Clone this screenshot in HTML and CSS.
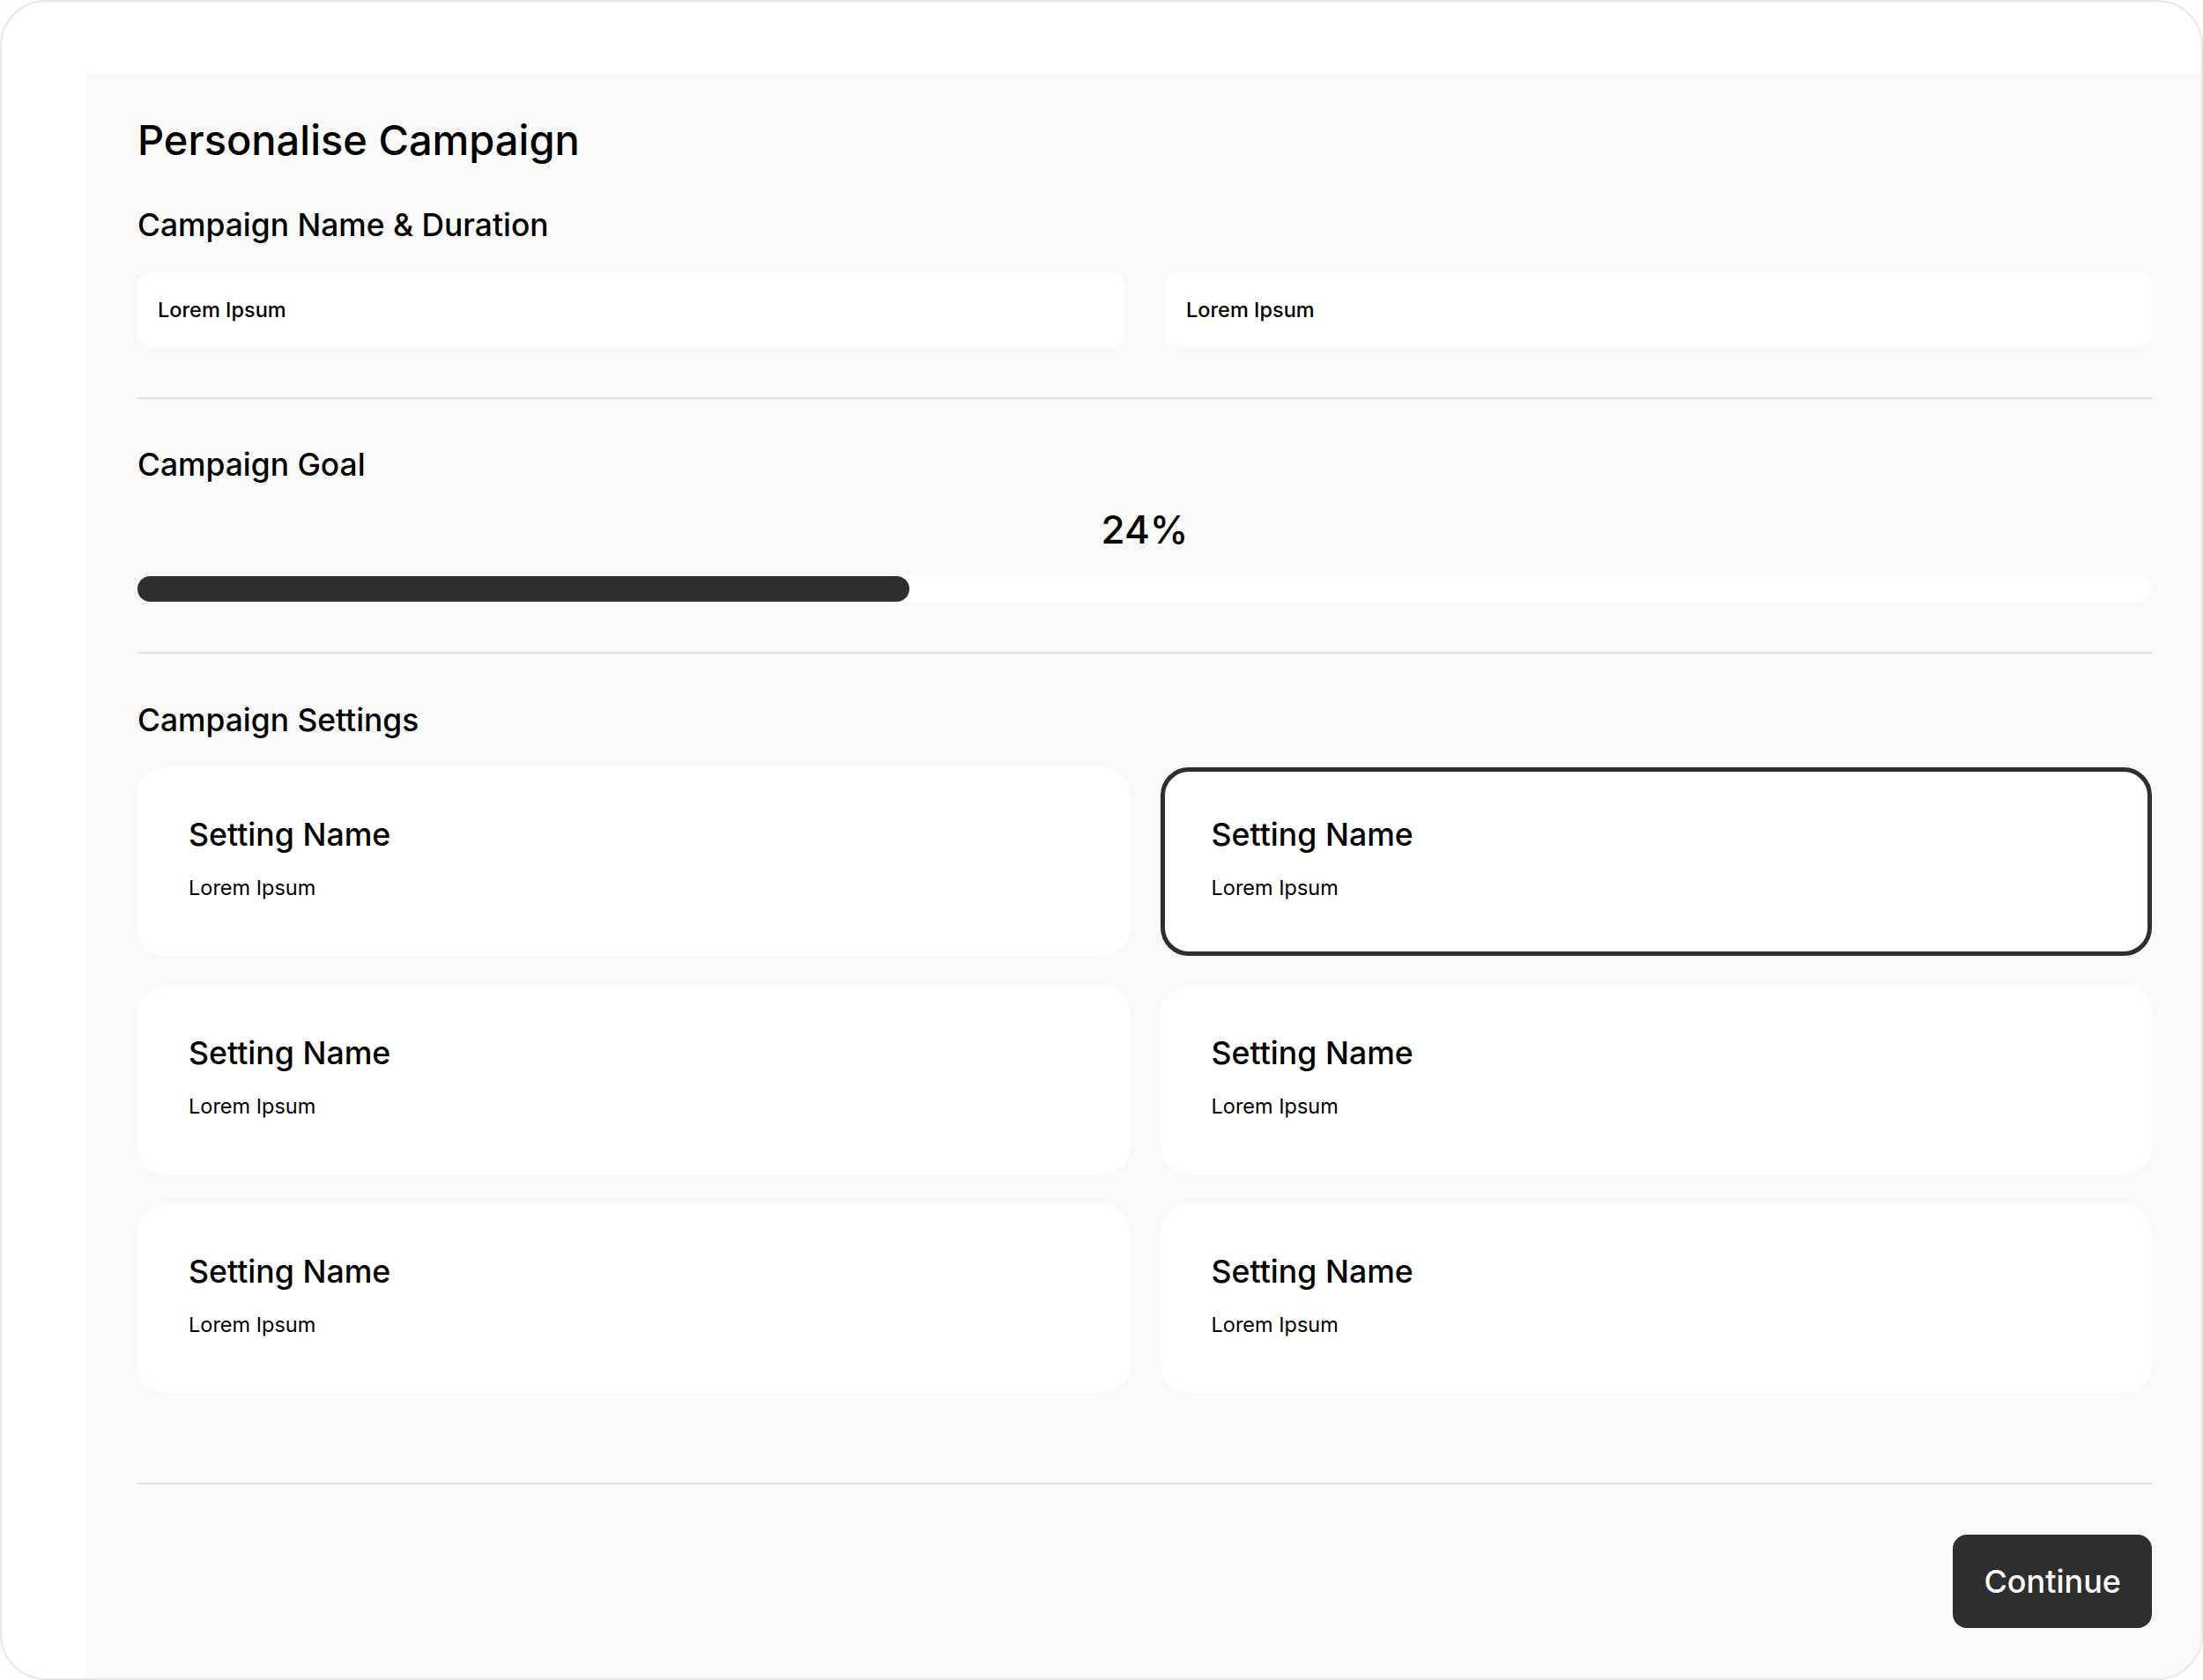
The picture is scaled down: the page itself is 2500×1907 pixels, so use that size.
FILE: index.html
```html
<!DOCTYPE html>
<html>
    <head>
        <meta charset="utf-8">
        <link rel="stylesheet" href="styles.css">
    </head>
    <body>
        <div id="frame">
            <main id="panel">
                <h1 class="page-title">Personalise Campaign</h1>

                <section class="block name-block">
                    <h2 class="block-title">Campaign Name &amp; Duration</h2>
                    <div class="field-row">
                        <div class="field">Lorem Ipsum</div>
                        <div class="field">Lorem Ipsum</div>
                    </div>
                </section>

                <hr class="divider name-divider"/>

                <section class="block goal-block">
                    <h2 class="block-title">Campaign Goal</h2>
                    <div class="goal-value">24%</div>
                    <div class="progress">
                        <div class="progress-fill" style="width: 38.3%"></div>
                    </div>
                </section>

                <hr class="divider goal-divider"/>

                <section class="block settings-block">
                    <h2 class="block-title">Campaign Settings</h2>
                    <div class="settings-grid">
                        <div class="setting">
                            <div class="setting-name">Setting Name</div>
                            <div class="setting-desc">Lorem Ipsum</div>
                        </div>
                        <div class="setting active">
                            <div class="setting-name">Setting Name</div>
                            <div class="setting-desc">Lorem Ipsum</div>
                        </div>
                        <div class="setting">
                            <div class="setting-name">Setting Name</div>
                            <div class="setting-desc">Lorem Ipsum</div>
                        </div>
                        <div class="setting">
                            <div class="setting-name">Setting Name</div>
                            <div class="setting-desc">Lorem Ipsum</div>
                        </div>
                        <div class="setting">
                            <div class="setting-name">Setting Name</div>
                            <div class="setting-desc">Lorem Ipsum</div>
                        </div>
                        <div class="setting">
                            <div class="setting-name">Setting Name</div>
                            <div class="setting-desc">Lorem Ipsum</div>
                        </div>
                    </div>
                </section>

                <hr class="divider settings-divider"/>

                <div class="actions">
                    <button id="continue">Continue</button>
                </div>
            </main>
        </div>
    </body>
</html>
```

FILE: styles.css
```css
html, body{
    margin: 0;
    padding: 0;
}

body{
    font-family: 'Inter', 'Noto Sans', sans-serif;
    color: #000;
    background-color: #fff;
}

#frame{
    box-sizing: border-box;
    width: 2500px;
    height: 1907px;
    border: 2px solid #e8e8e8;
    border-radius: 52px;
    background-color: #fff;
    overflow: hidden;
    display: flex;
    flex-direction: column;
}

#panel{
    flex: 1;
    margin: 82px 0 0 96px;
    padding: 46px 56px 57px 58px;
    background-color: #f9f9f9;
    display: flex;
    flex-direction: column;
}

.page-title{
    margin: 0;
    font-size: 47px;
    line-height: 58px;
    font-weight: 500;
}

.block-title{
    margin: 0;
    font-size: 35.4px;
    line-height: 44px;
    font-weight: 500;
}

.name-block{
    margin-top: 46px;
}

.field-row{
    display: flex;
    gap: 48px;
    margin-top: 32px;
}

.field{
    flex: 1;
    height: 83px;
    box-sizing: border-box;
    padding-left: 23px;
    display: flex;
    align-items: center;
    background-color: #fff;
    border-radius: 13px;
    font-size: 23.5px;
    font-weight: 500;
}

.divider{
    border: 0;
    height: 2px;
    margin: 0;
    background-color: #e3e3e3;
}

.name-divider{
    margin-top: 58px;
}

.goal-block{
    margin-top: 53px;
}

.goal-value{
    margin-top: 22px;
    text-align: center;
    font-size: 44px;
    line-height: 58px;
    font-weight: 500;
}

.progress{
    margin-top: 24px;
    height: 29px;
    border-radius: 15px;
    background-color: #fff;
}

.progress-fill{
    height: 100%;
    border-radius: 15px;
    background-color: #2e2e2e;
}

.goal-divider{
    margin-top: 57px;
}

.settings-block{
    margin-top: 54px;
}

.settings-grid{
    margin-top: 31px;
    display: grid;
    grid-template-columns: 1fr 1fr;
    column-gap: 35px;
    row-gap: 34px;
}

.setting{
    box-sizing: border-box;
    border: 5px solid transparent;
    border-radius: 32px;
    padding: 49px 53px 58px;
    background-color: #fff;
}

.setting.active{
    border-color: #2e2e2e;
}

.setting-name{
    font-size: 35.7px;
    line-height: 44px;
    font-weight: 500;
}

.setting-desc{
    margin-top: 24px;
    font-size: 23.5px;
    line-height: 29px;
}

.settings-divider{
    margin-top: 102px;
}

.actions{
    margin-top: 57px;
    display: flex;
    justify-content: flex-end;
}

#continue{
    height: 106px;
    padding: 0 35px;
    border: 0;
    border-radius: 16px;
    background-color: #2e2e2e;
    color: #fff;
    font-family: 'Inter', 'Noto Sans', sans-serif;
    font-size: 36px;
    font-weight: 500;
    cursor: pointer;
}
```
